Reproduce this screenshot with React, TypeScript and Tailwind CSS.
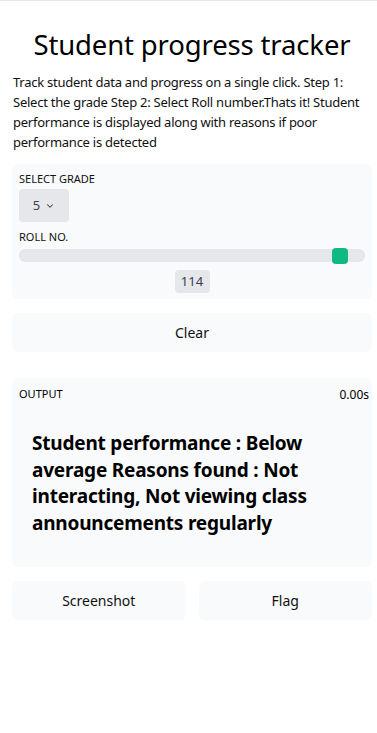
import { ChevronDown } from "lucide-react";

export default function App() {
    return (
        <div className="min-h-[733px] bg-white border-t border-[#e5e7eb] text-black font-['Noto_Sans',sans-serif] pl-[12px] pr-[5px]">
            {/* Header */}
            <h1 className="text-[27.5px] leading-[36px] text-center pt-[26px] tracking-[-0.15px]">Student progress tracker</h1>
            <p className="px-[1px] mt-[9px] text-[13px] leading-[20px] text-[#111] tracking-[-0.25px]">
                Track student data and progress on a single click. Step 1: Select the grade Step 2: Select Roll number.Thats it! Student performance is displayed along with reasons if poor performance is detected
            </p>

            {/* Inputs panel */}
            <div className="mt-[12px] bg-[#f9fafb] rounded-md px-[7px] pt-[7px] pb-[6px]">
                <div className="text-[11px] leading-[16px] text-[#111]">SELECT GRADE</div>
                <div className="mt-[2px] w-[50px] h-[33px] bg-[#e5e7eb] rounded flex items-center justify-center gap-[5px] text-[13px] text-[#374151]">
                    5
                    <ChevronDown size={10} strokeWidth={2.5} />
                </div>
                <div className="mt-[7px] text-[11px] leading-[16px] text-[#111]">ROLL NO.</div>
                <div className="relative mt-[4px] h-[13px] bg-[#e5e7eb] rounded-md">
                    <div className="absolute left-[313px] top-[-1px] w-[16px] h-[16px] rounded bg-[#10b981]" />
                </div>
                <div className="flex justify-center mt-[8px]">
                    <div className="w-[35px] h-[23px] bg-[#e5e7eb] rounded flex items-center justify-center text-[13px] text-[#374151]">114</div>
                </div>
            </div>

            {/* Clear */}
            <button className="block mt-[14px] w-full h-[39px] bg-[#f9fafb] rounded-md text-[14px] text-[#111]">Clear</button>

            {/* Output */}
            <div className="mt-[26px] h-[189px] bg-[#f9fafb] rounded-md px-[7px] pt-[8px]">
                <div className="flex justify-between">
                    <span className="text-[11px] leading-[16px]">OUTPUT</span>
                    <span className="text-[12px] leading-[18px] mr-[-4px]">0.00s</span>
                </div>
                <div className="mt-[26px] px-[13px] text-[19px] leading-[26.5px] font-bold tracking-[-0.2px]">
                    Student performance : Below average Reasons found : Not interacting, Not viewing class announcements regularly
                </div>
            </div>

            {/* Actions */}
            <div className="mt-[14px] grid grid-cols-2 gap-[13px]">
                <button className="h-[39px] bg-[#f9fafb] rounded-md text-[14px] text-[#111]">Screenshot</button>
                <button className="h-[39px] bg-[#f9fafb] rounded-md text-[14px] text-[#111]">Flag</button>
            </div>
        </div>
    );
}
